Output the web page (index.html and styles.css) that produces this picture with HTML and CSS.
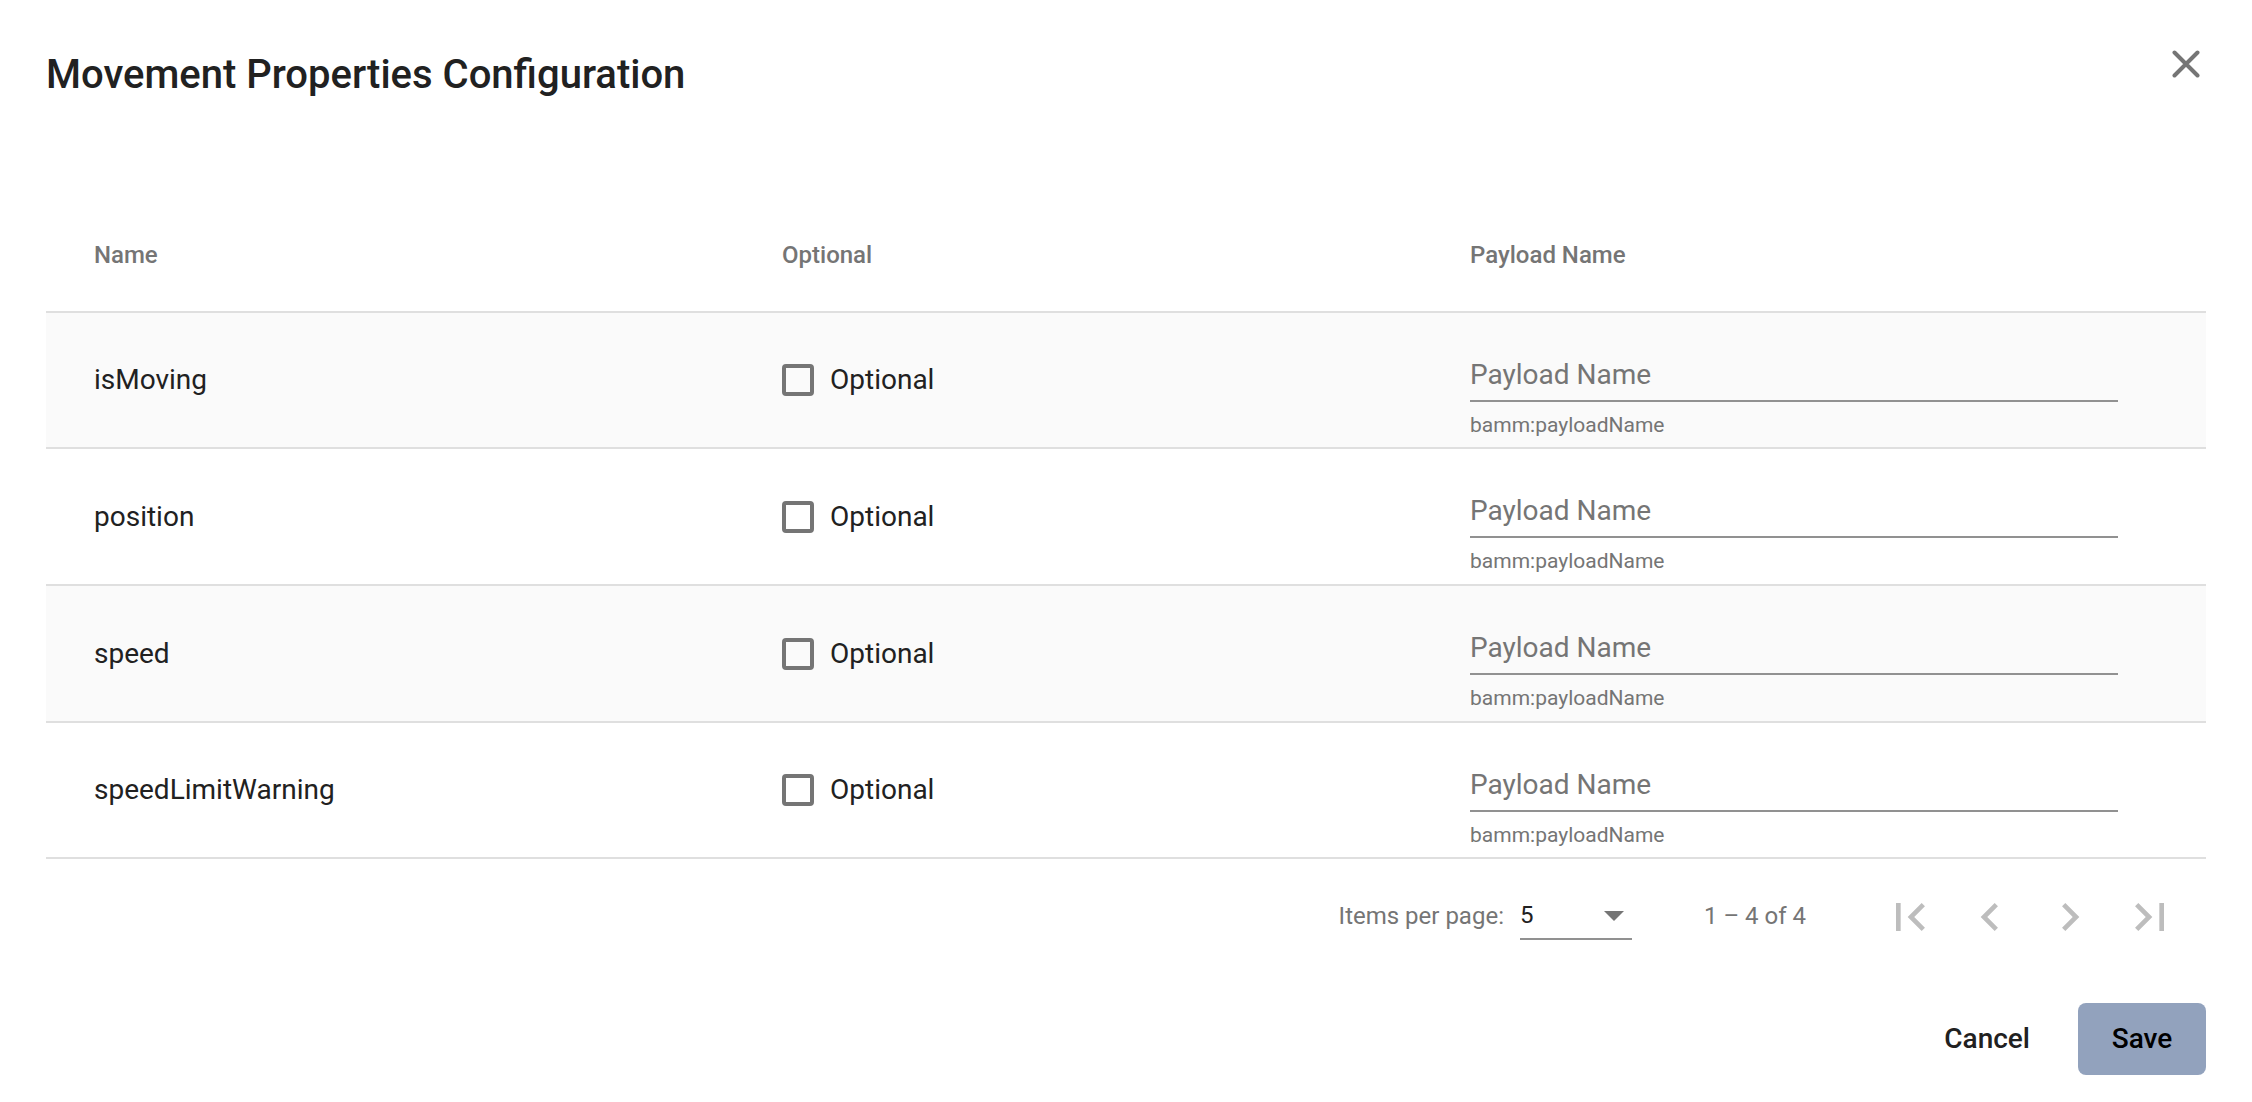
FILE: index.html
```html
<!DOCTYPE html>
<html lang="en">
<head>
  <meta charset="utf-8">
  <meta name="viewport" content="width=device-width, initial-scale=1">
  <title>Movement Properties Configuration</title>
  <link rel="stylesheet" href="styles.css">
</head>
<body>
  <main class="dialog">
    <header class="dialog-header">
      <h1 class="dialog-title">Movement Properties Configuration</h1>
      <button class="close-button" type="button" aria-label="Close">
        <svg class="close-icon" viewBox="0 0 28 28" aria-hidden="true"><path d="M2.5 2.5l23 23M25.5 2.5l-23 23"/></svg>
      </button>
    </header>

    <table class="properties">
      <thead>
        <tr class="row row-head">
          <th scope="col">Name</th>
          <th scope="col">Optional</th>
          <th scope="col">Payload Name</th>
        </tr>
      </thead>
      <tbody>
        <tr class="row">
          <td>isMoving</td>
          <td><label class="check"><input type="checkbox" class="check-box">Optional</label></td>
          <td class="field-cell">
            <input class="field-input" type="text" placeholder="Payload Name" aria-label="Payload Name" aria-describedby="hint-1">
            <div class="field-hint" id="hint-1">bamm:payloadName</div>
          </td>
        </tr>
        <tr class="row">
          <td>position</td>
          <td><label class="check"><input type="checkbox" class="check-box">Optional</label></td>
          <td class="field-cell">
            <input class="field-input" type="text" placeholder="Payload Name" aria-label="Payload Name" aria-describedby="hint-2">
            <div class="field-hint" id="hint-2">bamm:payloadName</div>
          </td>
        </tr>
        <tr class="row">
          <td>speed</td>
          <td><label class="check"><input type="checkbox" class="check-box">Optional</label></td>
          <td class="field-cell">
            <input class="field-input" type="text" placeholder="Payload Name" aria-label="Payload Name" aria-describedby="hint-3">
            <div class="field-hint" id="hint-3">bamm:payloadName</div>
          </td>
        </tr>
        <tr class="row">
          <td>speedLimitWarning</td>
          <td><label class="check"><input type="checkbox" class="check-box">Optional</label></td>
          <td class="field-cell">
            <input class="field-input" type="text" placeholder="Payload Name" aria-label="Payload Name" aria-describedby="hint-4">
            <div class="field-hint" id="hint-4">bamm:payloadName</div>
          </td>
        </tr>
      </tbody>
    </table>

    <nav class="paginator" aria-label="Pagination">
      <label class="page-label" for="page-size">Items per page:</label>
      <div class="page-size">
        <select class="page-select" id="page-size">
          <option selected>5</option>
          <option>10</option>
          <option>25</option>
        </select>
        <svg class="page-arrow" viewBox="0 0 20 10" aria-hidden="true"><path d="M0 0h20L10 10z"/></svg>
      </div>
      <div class="page-range">1 – 4 of 4</div>
      <div class="page-buttons">
        <button class="page-button" type="button" disabled aria-label="First page">
          <svg viewBox="0 0 24 24" aria-hidden="true"><path d="M18.41 16.59L13.82 12l4.59-4.59L17 6l-6 6 6 6zM6 6h2v12H6z"/></svg>
        </button>
        <button class="page-button" type="button" disabled aria-label="Previous page">
          <svg viewBox="0 0 24 24" aria-hidden="true"><path d="M15.41 7.41L14 6l-6 6 6 6 1.41-1.41L10.83 12z"/></svg>
        </button>
        <button class="page-button" type="button" disabled aria-label="Next page">
          <svg viewBox="0 0 24 24" aria-hidden="true"><path d="M10 6L8.59 7.41 13.17 12l-4.58 4.59L10 18l6-6z"/></svg>
        </button>
        <button class="page-button" type="button" disabled aria-label="Last page">
          <svg viewBox="0 0 24 24" aria-hidden="true"><path d="M5.59 7.41L10.18 12l-4.59 4.59L7 18l6-6-6-6zM16 6h2v12h-2z"/></svg>
        </button>
      </div>
    </nav>

    <footer class="actions">
      <button class="button" type="button">Cancel</button>
      <button class="button button-primary" type="submit">Save</button>
    </footer>
  </main>
</body>
</html>
```

FILE: styles.css
```css
* {
  box-sizing: border-box;
}

body {
  margin: 0;
  background: #fff;
  color: #212121;
  font: 400 28px/32px Roboto, sans-serif;
}

button,
input,
select {
  margin: 0;
  padding: 0;
  border: 0;
  background: none;
  color: inherit;
  font: inherit;
}

.dialog {
  padding: 50px 46px 27px;
}

.dialog-header {
  display: flex;
  align-items: flex-start;
  justify-content: space-between;
  margin-bottom: 99px;
}

.dialog-title {
  margin: 0;
  font-size: 40px;
  font-weight: 500;
  line-height: 50px;
}

.close-button {
  display: flex;
  padding: 0 6px;
}

.close-icon {
  width: 28px;
  height: 28px;
  fill: none;
  stroke: #757575;
  stroke-width: 4;
  stroke-linecap: round;
}

/* Table */

.properties,
.properties thead,
.properties tbody {
  display: block;
}

.row {
  display: grid;
  grid-template-columns: repeat(3, 1fr);
  align-items: center;
  min-height: 137px;
  padding: 0 48px;
  border-bottom: 2px solid #dfdfdf;
}

.row:first-child,
.row:last-child {
  min-height: 136px;
}

.row.row-head {
  min-height: 114px;
  color: #757575;
  font-size: 24px;
}

tbody .row:nth-child(odd) {
  background: #fafafa;
}

th,
td {
  padding: 0;
  text-align: left;
}

th {
  font-weight: 500;
}

.check {
  display: flex;
  align-items: center;
  gap: 16px;
  width: fit-content;
}

.check-box {
  appearance: none;
  width: 32px;
  height: 32px;
  border: 4px solid #757575;
  border-radius: 4px;
}

.check-box:checked {
  background: #757575;
}

.field-cell {
  align-self: start;
  padding: 35px 40px 0 0;
}

.field-input {
  display: block;
  width: 100%;
  height: 54px;
  border-bottom: 2px solid #919191;
}

.field-input::placeholder {
  color: #757575;
  opacity: 1;
}

.field-hint {
  margin-top: 11px;
  color: #757575;
  font-size: 21px;
  line-height: 24px;
}

/* Paginator */

.paginator {
  display: flex;
  align-items: center;
  justify-content: flex-end;
  min-height: 116px;
  padding-right: 16px;
  color: #757575;
  font-size: 24px;
}

.page-label,
.page-size,
.page-range {
  padding-bottom: 2px;
}

.page-label {
  margin-right: 16px;
}

.page-size {
  display: grid;
  align-items: center;
  width: 112px;
  margin-right: 72px;
}

.page-select {
  grid-area: 1 / 1;
  appearance: none;
  width: 100%;
  height: 48px;
  border-bottom: 2px solid #919191;
  color: #212121;
}

.page-arrow {
  grid-area: 1 / 1;
  justify-self: end;
  width: 20px;
  height: 10px;
  margin-right: 8px;
  fill: #757575;
  pointer-events: none;
}

.page-range {
  margin-right: 64px;
}

.page-buttons {
  display: flex;
}

.page-button {
  display: grid;
  place-items: center;
  width: 80px;
  height: 80px;
}

.page-button svg {
  width: 56px;
  height: 56px;
  fill: #bdbdbd;
}

/* Actions */

.actions {
  display: flex;
  justify-content: flex-end;
  gap: 16px;
  margin-top: 28px;
}

.button {
  min-width: 128px;
  min-height: 72px;
  padding: 0 32px;
  border-radius: 8px;
  font-weight: 500;
}

.button-primary {
  background: #92a2bd;
  color: #000;
}
```
